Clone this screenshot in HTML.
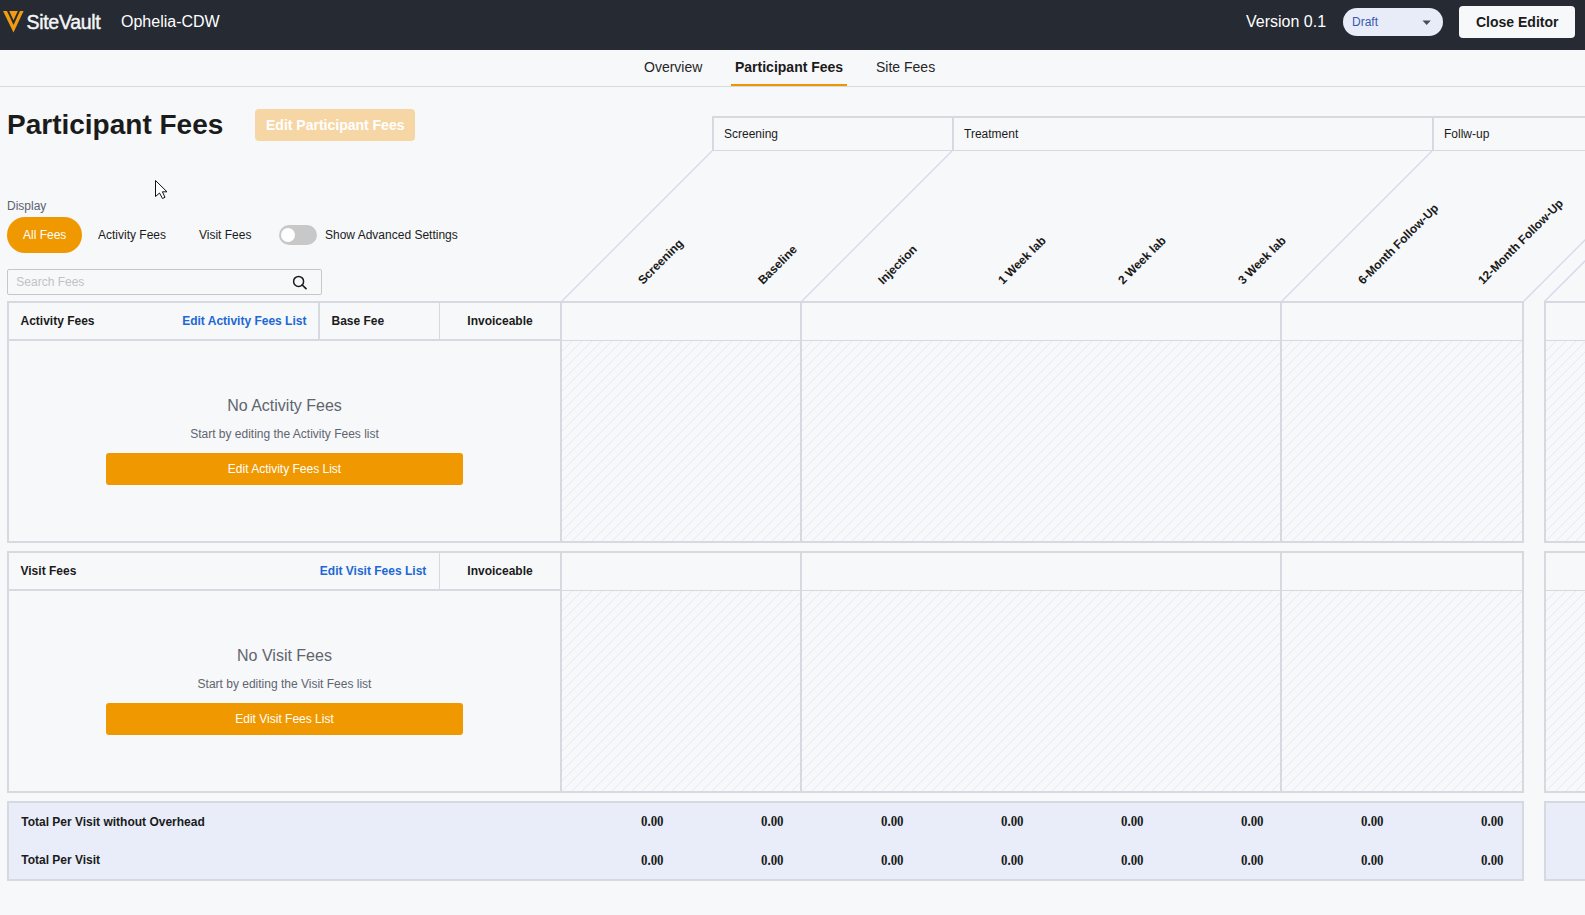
<!DOCTYPE html>
<html>
<head>
<meta charset="utf-8">
<style>
html,body{margin:0;padding:0;}
body{width:1585px;height:915px;overflow:hidden;position:relative;background:#f7f8fa;font-family:"Liberation Sans",sans-serif;color:#1b1b1b;}
.a{position:absolute;white-space:nowrap;line-height:1;}
.b{font-weight:700;}
#top{position:absolute;left:0;top:0;width:1585px;height:50px;background:#262a33;}
</style>
</head>
<body>
<!-- top bar -->
<div id="top"></div>
<svg class="a" style="left:0;top:0" width="30" height="40" viewBox="0 0 30 40">
  <polygon points="3,11 23.6,11 13.5,32.5" fill="#f29b11"/>
  <polygon points="7,11 20,11 13.5,25" fill="#262a33"/>
  <polygon points="9.2,11 17.8,11 13.5,20.3" fill="#f29b11"/>
</svg>
<div class="a" id="sv" style="left:26.5px;top:12.8px;font-size:19.5px;color:#f4f5f7;-webkit-text-stroke:0.45px #f4f5f7;letter-spacing:-0.3px;">SiteVault</div>
<div class="a" id="oph" style="left:121px;top:14px;font-size:16px;color:#fff;">Ophelia-CDW</div>
<div class="a" id="ver" style="left:1246px;top:14px;font-size:16px;color:#fff;">Version 0.1</div>
<div class="a" style="left:1343px;top:8px;width:100px;height:28px;border-radius:14px;background:#e8ebf8;"></div>
<div class="a" id="draft" style="left:1352px;top:15.6px;font-size:12px;color:#3a59b5;">Draft</div>
<svg class="a" style="left:1422px;top:20px" width="10" height="6"><polygon points="0.5,0.5 8.8,0.5 4.65,5" fill="#4a4d55"/></svg>
<div class="a" style="left:1459px;top:6px;width:116px;height:32px;border-radius:4px;background:#f7f8fa;"></div>
<div class="a b" id="close" style="left:1476px;top:15px;font-size:14px;color:#1b1b1b;">Close Editor</div>

<!-- tabs -->
<div class="a" style="left:0;top:86px;width:1585px;height:1px;background:#d7dade;"></div>
<div class="a" style="left:731px;top:84px;width:116px;height:2px;background:#f09400;"></div>
<div class="a" style="left:644px;top:60.3px;font-size:14px;color:#262626;">Overview</div>
<div class="a b" style="left:735px;top:60.3px;font-size:14px;color:#1b1b1b;">Participant Fees</div>
<div class="a" style="left:876px;top:60.3px;font-size:14px;color:#262626;">Site Fees</div>

<!-- title -->
<div class="a b" id="title" style="left:7px;top:111.4px;font-size:28px;color:#1b1b1b;">Participant Fees</div>
<div class="a" style="left:255px;top:109px;width:160px;height:32px;border-radius:4px;background:#f7d6a6;"></div>
<div class="a b" style="left:266px;top:118.3px;font-size:14px;color:#fff;">Edit Participant Fees</div>

<!-- display controls -->
<div class="a" style="left:7px;top:199.8px;font-size:12px;color:#5c6370;">Display</div>
<div class="a" style="left:7px;top:217px;width:75px;height:36px;border-radius:18px;background:#f09800;"></div>
<div class="a" style="left:23px;top:228.7px;font-size:12px;color:#fff;">All Fees</div>
<div class="a" style="left:98px;top:228.7px;font-size:12px;color:#1b1b1b;">Activity Fees</div>
<div class="a" style="left:199px;top:228.7px;font-size:12px;color:#1b1b1b;">Visit Fees</div>
<div class="a" style="left:279px;top:225px;width:38px;height:20px;border-radius:10px;background:#c8c8c8;"></div>
<div class="a" style="left:281px;top:228px;width:14px;height:14px;border-radius:7px;background:#fff;"></div>
<div class="a" style="left:325px;top:228.6px;font-size:12px;color:#1b1b1b;">Show Advanced Settings</div>

<!-- search -->
<div class="a" style="left:7px;top:269px;width:313px;height:24px;border:1px solid #c6c7c9;border-radius:2px;background:#f7f8fa;"></div>
<div class="a" style="left:16.3px;top:275.8px;font-size:12px;color:#c1c2c4;">Search Fees</div>
<svg class="a" style="left:291px;top:274px" width="18" height="18" viewBox="0 0 18 18">
  <circle cx="7.6" cy="7.4" r="5" fill="none" stroke="#1b1b1b" stroke-width="1.5"/>
  <line x1="11.2" y1="11" x2="15" y2="14.6" stroke="#1b1b1b" stroke-width="1.7" stroke-linecap="round"/>
</svg>


<!-- GRID -->
<svg class="a" style="left:0;top:0" width="1585" height="915">
<defs><pattern id="h1" patternUnits="userSpaceOnUse" x="2" y="1" width="10" height="10"><path d="M-1,1 L1,-1 M0,10 L10,0 M9,11 L11,9" stroke="#e6e9f5" stroke-width="1"/></pattern><pattern id="h2" patternUnits="userSpaceOnUse" x="6" y="1" width="10" height="10"><path d="M-1,1 L1,-1 M0,10 L10,0 M9,11 L11,9" stroke="#e6e9f5" stroke-width="1"/></pattern></defs>
<rect x="712" y="116" width="873" height="2" fill="#d6d9df"/>
<rect x="712" y="150" width="873" height="1" fill="#d6d9df"/>
<rect x="712" y="116" width="2" height="35" fill="#d6d9df"/>
<rect x="952" y="116" width="2" height="35" fill="#d6d9df"/>
<rect x="1432" y="116" width="2" height="35" fill="#d6d9df"/>
<line x1="712.5" y1="150.5" x2="561.5" y2="301.5" stroke="#d3d9e9" stroke-width="1.25"/>
<line x1="952.5" y1="150.5" x2="801.5" y2="301.5" stroke="#d3d9e9" stroke-width="1.25"/>
<line x1="1432.5" y1="150.5" x2="1281.5" y2="301.5" stroke="#d3d9e9" stroke-width="1.25"/>
<line x1="1523.5" y1="301.5" x2="1724" y2="101.0" stroke="#d3d9e9" stroke-width="1.25"/>
<line x1="1544.5" y1="301.5" x2="1745" y2="101.0" stroke="#d3d9e9" stroke-width="1.25"/>
<rect x="562" y="341" width="238" height="200" fill="url(#h1)"/>
<rect x="802" y="341" width="478" height="200" fill="url(#h1)"/>
<rect x="1282" y="341" width="240" height="200" fill="url(#h1)"/>
<rect x="1546" y="341" width="39" height="200" fill="url(#h2)"/>
<rect x="7" y="301" width="1517" height="2" fill="#d6d9df"/>
<rect x="7" y="541" width="1517" height="2" fill="#d6d9df"/>
<rect x="7" y="301" width="2" height="242" fill="#d6d9df"/>
<rect x="1522" y="301" width="2" height="242" fill="#d6d9df"/>
<rect x="560" y="301" width="2" height="242" fill="#d6d9df"/>
<rect x="800" y="301" width="2" height="242" fill="#d6d9df"/>
<rect x="1280" y="301" width="2" height="242" fill="#d6d9df"/>
<rect x="7" y="339" width="555" height="2" fill="#d6d9df"/>
<rect x="562" y="340" width="960" height="1" fill="#d6d9df"/>
<rect x="1544" y="301" width="41" height="2" fill="#d6d9df"/>
<rect x="1544" y="541" width="41" height="2" fill="#d6d9df"/>
<rect x="1544" y="301" width="2" height="242" fill="#d6d9df"/>
<rect x="1546" y="340" width="39" height="1" fill="#d6d9df"/>
<rect x="318" y="303" width="2" height="36" fill="#d6d9df"/>
<rect x="439" y="303" width="1" height="36" fill="#d6d9df"/>
<rect x="562" y="591" width="238" height="200" fill="url(#h1)"/>
<rect x="802" y="591" width="478" height="200" fill="url(#h1)"/>
<rect x="1282" y="591" width="240" height="200" fill="url(#h1)"/>
<rect x="1546" y="591" width="39" height="200" fill="url(#h2)"/>
<rect x="7" y="551" width="1517" height="2" fill="#d6d9df"/>
<rect x="7" y="791" width="1517" height="2" fill="#d6d9df"/>
<rect x="7" y="551" width="2" height="242" fill="#d6d9df"/>
<rect x="1522" y="551" width="2" height="242" fill="#d6d9df"/>
<rect x="560" y="551" width="2" height="242" fill="#d6d9df"/>
<rect x="800" y="551" width="2" height="242" fill="#d6d9df"/>
<rect x="1280" y="551" width="2" height="242" fill="#d6d9df"/>
<rect x="7" y="589" width="555" height="2" fill="#d6d9df"/>
<rect x="562" y="590" width="960" height="1" fill="#d6d9df"/>
<rect x="1544" y="551" width="41" height="2" fill="#d6d9df"/>
<rect x="1544" y="791" width="41" height="2" fill="#d6d9df"/>
<rect x="1544" y="551" width="2" height="242" fill="#d6d9df"/>
<rect x="1546" y="590" width="39" height="1" fill="#d6d9df"/>
<rect x="439" y="553" width="1" height="36" fill="#d6d9df"/>
<rect x="7" y="801" width="1517" height="80" fill="#d6d9df"/>
<rect x="9" y="803" width="1513" height="76" fill="#e8edf9"/>
<rect x="1544" y="801" width="41" height="80" fill="#d6d9df"/>
<rect x="1546" y="803" width="39" height="76" fill="#e8edf9"/>
</svg>
<div class="a" style="left:724px;top:127.6px;font-size:12px;">Screening</div>
<div class="a" style="left:964px;top:127.6px;font-size:12px;">Treatment</div>
<div class="a" style="left:1444px;top:127.6px;font-size:12px;">Follw-up</div>
<div class="a b vl" style="left:643px;top:274.6px;font-size:12px;transform-origin:0 10.16px;transform:rotate(-45deg);">Screening</div>
<div class="a b vl" style="left:763px;top:274.6px;font-size:12px;transform-origin:0 10.16px;transform:rotate(-45deg);">Baseline</div>
<div class="a b vl" style="left:883px;top:274.6px;font-size:12px;transform-origin:0 10.16px;transform:rotate(-45deg);">Injection</div>
<div class="a b vl" style="left:1003px;top:274.6px;font-size:12px;transform-origin:0 10.16px;transform:rotate(-45deg);">1 Week lab</div>
<div class="a b vl" style="left:1123px;top:274.6px;font-size:12px;transform-origin:0 10.16px;transform:rotate(-45deg);">2 Week lab</div>
<div class="a b vl" style="left:1243px;top:274.6px;font-size:12px;transform-origin:0 10.16px;transform:rotate(-45deg);">3 Week lab</div>
<div class="a b vl" style="left:1363px;top:274.6px;font-size:12px;transform-origin:0 10.16px;transform:rotate(-45deg);">6-Month Follow-Up</div>
<div class="a b vl" style="left:1483px;top:274.6px;font-size:12px;transform-origin:0 10.16px;transform:rotate(-45deg);">12-Month Follow-Up</div>
<div class="a b" style="left:20.5px;top:314.8px;font-size:12px;">Activity Fees</div>
<div class="a b" style="left:182.2px;top:314.8px;font-size:12px;color:#2168d4;">Edit Activity Fees List</div>
<div class="a b" style="left:331.5px;top:314.8px;font-size:12px;">Base Fee</div>
<div class="a b" style="left:440px;width:120px;text-align:center;top:314.8px;font-size:12px;">Invoiceable</div>
<div class="a" style="left:9px;width:551px;text-align:center;top:398px;font-size:16px;color:#60656e;">No Activity Fees</div>
<div class="a" style="left:9px;width:551px;text-align:center;top:427.5px;font-size:12px;color:#60656e;">Start by editing the Activity Fees list</div>
<div class="a" style="left:106px;width:357px;height:32px;border-radius:3px;background:#f09800;top:453px;"></div>
<div class="a" style="left:106px;width:357px;text-align:center;top:462.6px;font-size:12px;color:#fff;">Edit Activity Fees List</div>
<div class="a b" style="left:20.5px;top:564.8px;font-size:12px;">Visit Fees</div>
<div class="a b" style="right:1158.7px;top:564.8px;font-size:12px;color:#2168d4;">Edit Visit Fees List</div>
<div class="a b" style="left:440px;width:120px;text-align:center;top:564.8px;font-size:12px;">Invoiceable</div>
<div class="a" style="left:9px;width:551px;text-align:center;top:648px;font-size:16px;color:#60656e;">No Visit Fees</div>
<div class="a" style="left:9px;width:551px;text-align:center;top:677.5px;font-size:12px;color:#60656e;">Start by editing the Visit Fees list</div>
<div class="a" style="left:106px;width:357px;height:32px;border-radius:3px;background:#f09800;top:703px;"></div>
<div class="a" style="left:106px;width:357px;text-align:center;top:712.6px;font-size:12px;color:#fff;">Edit Visit Fees List</div>
<div class="a" style="left:21.2px;top:815.7px;font-size:12px;font-weight:700;">Total Per Visit without Overhead</div>
<div class="a" style="left:21.2px;top:853.9px;font-size:12px;font-weight:700;">Total Per Visit</div>
<div class="a" style="left:640.5px;top:815px;font-size:14px;font-family:'Liberation Serif',serif;font-weight:700;transform-origin:0 0;transform:scaleX(0.92);">0.00</div>
<div class="a" style="left:640.5px;top:853.6px;font-size:14px;font-family:'Liberation Serif',serif;font-weight:700;transform-origin:0 0;transform:scaleX(0.92);">0.00</div>
<div class="a" style="left:760.5px;top:815px;font-size:14px;font-family:'Liberation Serif',serif;font-weight:700;transform-origin:0 0;transform:scaleX(0.92);">0.00</div>
<div class="a" style="left:760.5px;top:853.6px;font-size:14px;font-family:'Liberation Serif',serif;font-weight:700;transform-origin:0 0;transform:scaleX(0.92);">0.00</div>
<div class="a" style="left:880.5px;top:815px;font-size:14px;font-family:'Liberation Serif',serif;font-weight:700;transform-origin:0 0;transform:scaleX(0.92);">0.00</div>
<div class="a" style="left:880.5px;top:853.6px;font-size:14px;font-family:'Liberation Serif',serif;font-weight:700;transform-origin:0 0;transform:scaleX(0.92);">0.00</div>
<div class="a" style="left:1000.5px;top:815px;font-size:14px;font-family:'Liberation Serif',serif;font-weight:700;transform-origin:0 0;transform:scaleX(0.92);">0.00</div>
<div class="a" style="left:1000.5px;top:853.6px;font-size:14px;font-family:'Liberation Serif',serif;font-weight:700;transform-origin:0 0;transform:scaleX(0.92);">0.00</div>
<div class="a" style="left:1120.5px;top:815px;font-size:14px;font-family:'Liberation Serif',serif;font-weight:700;transform-origin:0 0;transform:scaleX(0.92);">0.00</div>
<div class="a" style="left:1120.5px;top:853.6px;font-size:14px;font-family:'Liberation Serif',serif;font-weight:700;transform-origin:0 0;transform:scaleX(0.92);">0.00</div>
<div class="a" style="left:1240.5px;top:815px;font-size:14px;font-family:'Liberation Serif',serif;font-weight:700;transform-origin:0 0;transform:scaleX(0.92);">0.00</div>
<div class="a" style="left:1240.5px;top:853.6px;font-size:14px;font-family:'Liberation Serif',serif;font-weight:700;transform-origin:0 0;transform:scaleX(0.92);">0.00</div>
<div class="a" style="left:1360.5px;top:815px;font-size:14px;font-family:'Liberation Serif',serif;font-weight:700;transform-origin:0 0;transform:scaleX(0.92);">0.00</div>
<div class="a" style="left:1360.5px;top:853.6px;font-size:14px;font-family:'Liberation Serif',serif;font-weight:700;transform-origin:0 0;transform:scaleX(0.92);">0.00</div>
<div class="a" style="left:1480.5px;top:815px;font-size:14px;font-family:'Liberation Serif',serif;font-weight:700;transform-origin:0 0;transform:scaleX(0.92);">0.00</div>
<div class="a" style="left:1480.5px;top:853.6px;font-size:14px;font-family:'Liberation Serif',serif;font-weight:700;transform-origin:0 0;transform:scaleX(0.92);">0.00</div>
<!-- cursor -->
<svg class="a" style="left:150px;top:175px" width="24" height="30" viewBox="150 175 24 30">
  <polygon points="155.5,180.5 155.5,196.5 159.5,193 162.5,198.5 165,197.3 162.4,191.8 167,191.8" fill="#fff" stroke="#111" stroke-width="1"/>
</svg>
</body>
</html>
